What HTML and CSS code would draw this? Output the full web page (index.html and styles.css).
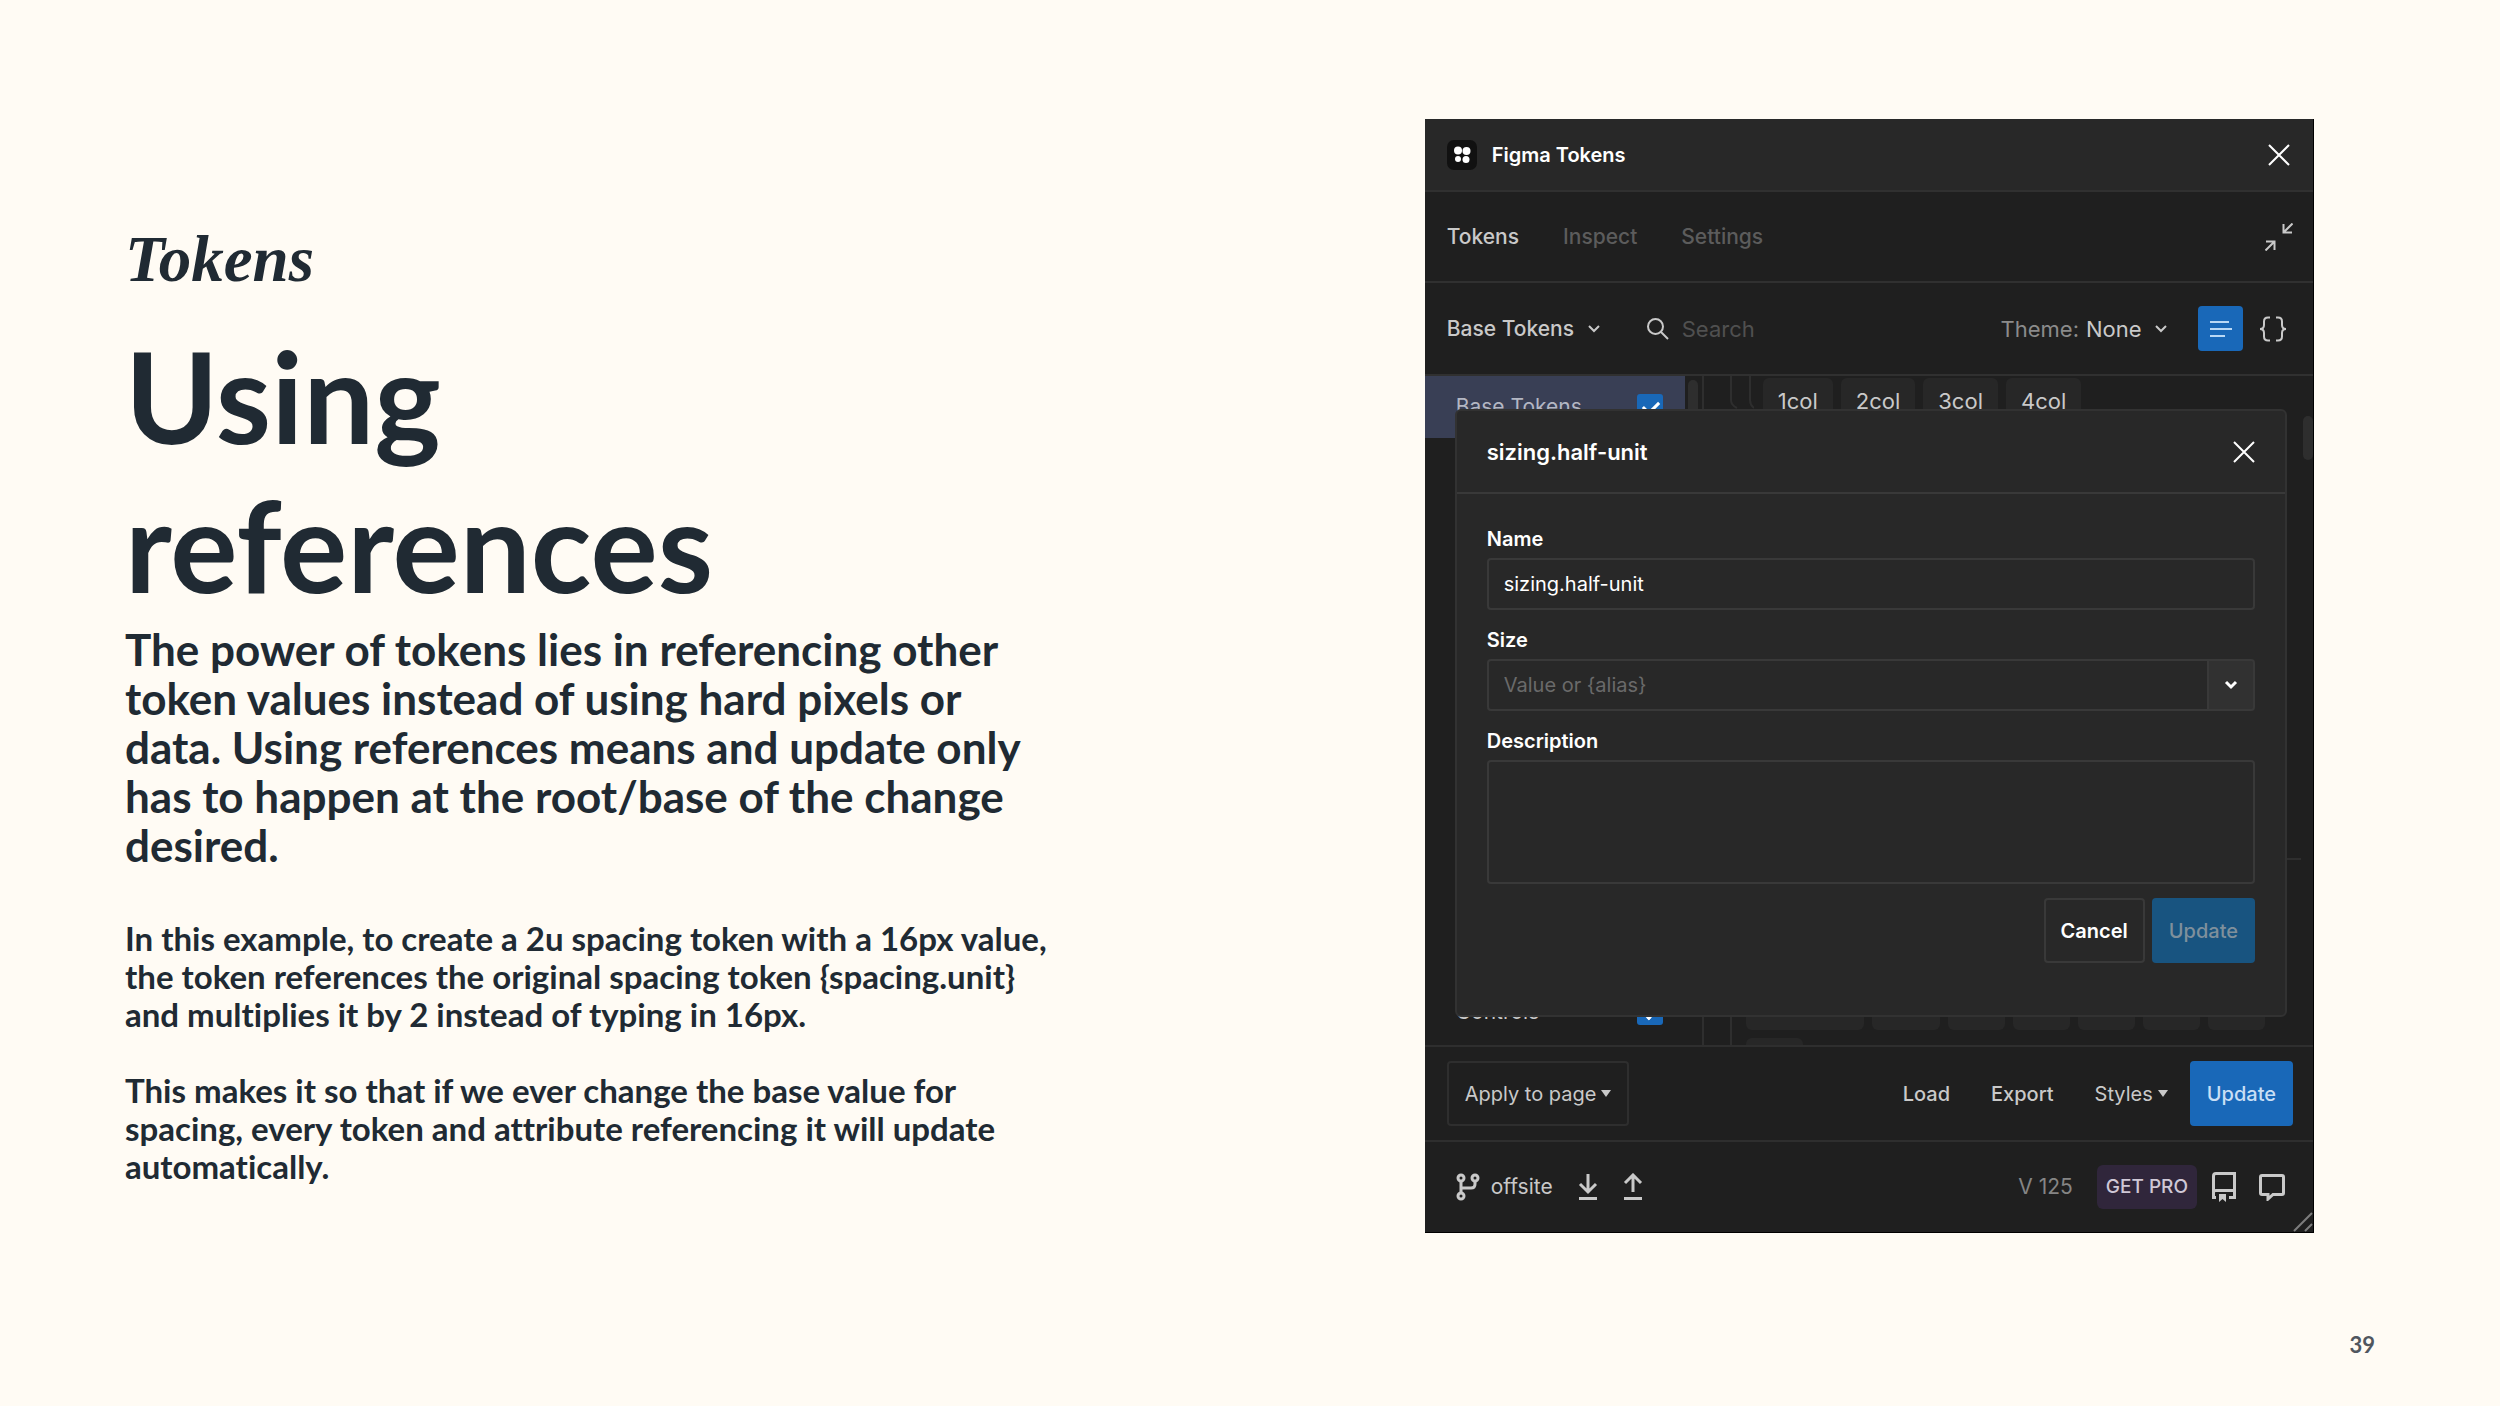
FILE: index.html
```
<!DOCTYPE html>
<html lang="en">
<head>
    <meta charset="UTF-8">
    <meta name="viewport" content="width=device-width, initial-scale=1.0">
    <title>Tokens - Using references</title>
    <link rel="stylesheet" href="styles.css">
</head>
<body>
    <main class="slide">
        <section class="copy">
            <p class="eyebrow">Tokens</p>
            <h1>Using<br>references</h1>
            <p class="lead">The power of tokens lies in referencing other<br>token values instead of using hard pixels or<br>data. Using references means and update only<br>has to happen at the root/base of the change<br>desired.</p>
            <p class="note">In this example, to create a 2u spacing token with a 16px value,<br>the token references the original spacing token {spacing.unit}<br>and multiplies it by 2 instead of typing in 16px.</p>
            <p class="note">This makes it so that if we ever change the base value for<br>spacing, every token and attribute referencing it will update<br>automatically.</p>
        </section>

        <section class="plugin">
            <header class="titlebar">
                <svg class="logo" width="30" height="30" viewBox="0 0 30 30">
                    <rect width="30" height="30" rx="7" fill="#111"/>
                    <g fill="#fff">
                        <circle cx="11" cy="10.500" r="4"/>
                        <circle cx="19.500" cy="11" r="4"/>
                        <circle cx="11" cy="19" r="3"/>
                        <circle cx="19" cy="19.500" r="3.500"/>
                    </g>
                </svg>
                <h2>Figma Tokens</h2>
                <button class="icon-btn push" aria-label="Close plugin">
                    <svg width="22" height="22" viewBox="0 0 22 22"><path d="M1 1l20 20M21 1L1 21"/></svg>
                </button>
            </header>

            <nav class="tabs">
                <a href="#" class="active">Tokens</a>
                <a href="#">Inspect</a>
                <a href="#">Settings</a>
                <button class="icon-btn push active" aria-label="Minimize">
                    <svg width="28" height="28" viewBox="0 0 28 28"><path d="M27.500 0.500L19 9M18.500 1v8.500H27M0.500 27.500L9 19M1 18.500h8.500V27"/></svg>
                </button>
            </nav>

            <div class="toolbar">
                <label class="picker sets">
                    <select aria-label="Token set"><option>Base Tokens</option></select>
                    <svg width="14" height="10" viewBox="0 0 14 10"><path d="M2 2l5 5 5-5"/></svg>
                </label>
                <label class="search">
                    <svg width="22" height="22" viewBox="0 0 22 22"><circle cx="8.500" cy="8.500" r="7.500"/><path d="M14 14l7 7"/></svg>
                    <input type="search" placeholder="Search">
                </label>
                <label class="picker theme">
                    <span>Theme:</span>
                    <select><option>None</option></select>
                    <svg width="14" height="10" viewBox="0 0 14 10"><path d="M2 2l5 5 5-5"/></svg>
                </label>
                <button class="list-btn" aria-label="List view">
                    <svg width="24" height="20" viewBox="0 0 24 20"><path d="M1 3h19M1 10h22M1 17h15"/></svg>
                </button>
                <button class="icon-btn" aria-label="JSON view">
                    <svg width="28" height="26" viewBox="0 0 28 26"><path d="M11 1.500H9C6.500 1.500 5 3 5 5.500V9c0 2.500-1.500 4-4 4 2.500 0 4 1.500 4 4v3.500c0 2.500 1.500 4 4 4h2M17 1.500h2c2.500 0 4 1.500 4 4V9c0 2.500 1.500 4 4 4-2.500 0-4 1.500-4 4v3.500c0 2.500-1.500 4-4 4h-2"/></svg>
                </button>
            </div>

            <div class="content">
                <aside class="sidebar">
                    <label class="set selected"><span>Base Tokens</span><input type="checkbox" checked></label>
                    <label class="set"><span>Controls</span><input type="checkbox" checked></label>
                    <i class="thumb"></i>
                </aside>
                <div class="tokens">
                    <div class="group nested">
                        <svg class="rails" width="25" height="34" viewBox="0 0 25 34"><path d="M2 0v24q0 5 6 8M21 0v24q0 5 4 8"/></svg>
                        <button class="chip">1col</button>
                        <button class="chip">2col</button>
                        <button class="chip">3col</button>
                        <button class="chip">4col</button>
                    </div>
                    <hr>
                    <div class="group last">
                        <i class="chip w120"></i>
                        <i class="chip w70"></i>
                        <i class="chip"></i>
                        <i class="chip"></i>
                        <i class="chip"></i>
                        <i class="chip"></i>
                        <i class="chip"></i>
                        <i class="chip"></i>
                    </div>
                    <i class="thumb"></i>
                </div>

                <form class="modal">
                    <div class="modal-head">
                        <h3>sizing.half-unit</h3>
                        <button type="button" class="icon-btn push" aria-label="Close dialog">
                            <svg width="22" height="22" viewBox="0 0 22 22"><path d="M1 1l20 20M21 1L1 21"/></svg>
                        </button>
                    </div>
                    <div class="modal-body">
                        <label for="name">Name</label>
                        <input id="name" type="text" value="sizing.half-unit">
                        <label for="size">Size</label>
                        <div class="combo">
                            <input id="size" type="text" placeholder="Value or {alias}">
                            <button type="button" aria-label="Choose alias">
                                <svg width="14" height="10" viewBox="0 0 14 10"><path d="M2 2l5 5 5-5"/></svg>
                            </button>
                        </div>
                        <label for="description">Description</label>
                        <textarea id="description"></textarea>
                        <div class="actions">
                            <button type="button" class="btn">Cancel</button>
                            <button type="submit" class="btn primary" disabled>Update</button>
                        </div>
                    </div>
                </form>
            </div>

            <div class="actionbar">
                <button class="btn outline">Apply to page<i class="caret"></i></button>
                <button class="text-btn push">Load</button>
                <button class="text-btn">Export</button>
                <button class="text-btn styles">Styles<i class="caret"></i></button>
                <button class="btn primary">Update</button>
            </div>

            <footer class="statusbar">
                <button class="branch">
                    <svg width="24" height="28" viewBox="0 0 24 28"><circle cx="5" cy="5" r="3"/><circle cx="19" cy="5" r="3"/><circle cx="5" cy="23" r="3"/><path d="M5 8v12M5 15h10q4 0 4-4V8"/></svg>
                    <span>offsite</span>
                </button>
                <button class="icon-btn" aria-label="Pull">
                    <svg width="20" height="28" viewBox="0 0 20 28"><path d="M10 1v17M2 11l8 8 8-8M1 25.500h18"/></svg>
                </button>
                <button class="icon-btn" aria-label="Push">
                    <svg width="20" height="28" viewBox="0 0 20 28"><path d="M10 19V2M2 10l8-8 8 8M1 25.500h18"/></svg>
                </button>
                <span class="version">V 125</span>
                <a href="#" class="pro">GET PRO</a>
                <button class="icon-btn docs" aria-label="Documentation">
                    <svg width="24" height="30" viewBox="0 0 24 30"><path d="M4 25.500H1.500V4q0-2.500 2.500-2.500h18.500v24H17M1.500 20q0-1.500 2.500-1.500h18.500"/><path class="solid" d="M7 22h7v8l-3.500-3L7 30z"/></svg>
                </button>
                <button class="icon-btn" aria-label="Feedback">
                    <svg width="26" height="28" viewBox="0 0 26 28"><path d="M3 2.500h20q1.500 0 1.500 1.500v16q0 1.500-1.500 1.500h-9l-5 4.500v-4.500H3q-1.500 0-1.500-1.500V4q0-1.500 1.500-1.500z"/></svg>
                </button>
            </footer>
            <svg class="resize" width="20" height="20" viewBox="0 0 20 20"><path d="M1 19L19 1M12 19l7-7"/></svg>
        </section>
    </main>
    <div class="page-number">39</div>
</body>
</html>
```

FILE: styles.css
```
* { margin: 0; padding: 0; box-sizing: border-box; }
body {
    display: flex;
    flex-direction: column;
    min-height: 100vh;
    background: #fffbf4;
    color: #202a33;
    font-family: Lato, sans-serif;
}
button, input, select, textarea { font: inherit; color: inherit; background: none; border: none; outline: none; }
a { color: inherit; text-decoration: none; }
svg { display: block; flex: none; fill: none; stroke: currentColor; stroke-width: 2; }
.push { margin-left: auto; }

.slide {
    display: grid;
    grid-template-columns: minmax(0, 19fr) minmax(0, 13fr);
    align-items: start;
    padding: 119px 186px 0 125px;
}

/* Left column */
.copy { padding-top: 100px; font-weight: 700; font-variant-ligatures: none; }
.eyebrow {
    font: italic bold 65px/80px "Liberation Serif", serif;
}
h1 { font-size: 126px; line-height: 149px; margin-top: 22px; }
.lead { font-size: 44px; line-height: 49px; margin-top: 6px; }
.note { font-size: 33px; line-height: 38px; margin-top: 38px; }
.lead + .note { margin-top: 49px; }

/* Plugin window */
.plugin {
    position: relative;
    background: #1f1f1f;
    border-right: 1px solid #000;
    border-bottom: 1px solid #000;
    color: #c9c9c9;
    font-family: Inter, sans-serif;
    font-size: 20px;
    font-weight: 500;
    line-height: 26px;
}
.titlebar, .tabs, .toolbar { display: flex; align-items: center; padding: 0 22px; border-bottom: 2px solid #303030; }
.titlebar { height: 73px; padding-right: 23px; background: #282828; color: #fff; }
.titlebar svg.logo { stroke: none; }
.titlebar h2 { margin-left: 15px; font-size: 20px; font-weight: 600; }
.icon-btn { display: flex; }

.tabs { height: 91px; padding-right: 20px; gap: 44px; color: #5c5c5c; font-size: 21px; }
.tabs .active { color: #c9c9c9; }

.toolbar { height: 93px; padding-right: 26px; }
.picker { display: flex; align-items: center; gap: 12px; }
.picker select { appearance: none; }
.sets { font-size: 21px; }
.search { display: flex; flex: 1; align-items: center; gap: 13px; margin-left: 46px; font-size: 22px; font-weight: 400; }
.search input { width: 100%; }
.search input::placeholder { color: #505050; opacity: 1; }
.theme { gap: 7px; font-size: 22px; font-weight: 400; }
.theme span { color: #8b8b8b; }
.theme svg { margin-left: 5px; }
.list-btn {
    display: flex;
    align-items: center;
    justify-content: center;
    width: 45px;
    height: 45px;
    margin: 0 16px 0 30px;
    border-radius: 4px;
    background: #1968b8;
    color: #b9d8f5;
}

/* Token list, mostly behind the dialog */
.content { position: relative; display: flex; height: 671px; border-bottom: 2px solid #2e2e2e; }
.sidebar {
    position: relative;
    display: flex;
    flex: none;
    flex-direction: column;
    justify-content: space-between;
    width: 279px;
    padding: 0 17px 2px 0;
    border-right: 2px solid #2e2e2e;
    font-size: 21px;
    font-weight: 400;
}
.set { display: flex; align-items: center; justify-content: space-between; height: 62px; padding: 0 22px 0 31px; }
.set.selected { background: #393f55; color: #b4b7c3; }
.set input {
    appearance: none;
    width: 26px;
    height: 26px;
    border-radius: 3px;
    background: #1968b8;
}
.set input::after {
    content: "";
    display: block;
    width: 13px;
    height: 7px;
    margin: 7px 6px;
    border: solid #fff;
    border-width: 0 0 3px 3px;
    transform: rotate(-45deg);
}
.thumb { position: absolute; border-radius: 5px; background: #2e2e2e; }
.sidebar .thumb { top: 4px; right: 4px; width: 10px; height: 200px; }
.tokens { position: relative; display: flex; flex: 1; flex-direction: column; min-width: 0; }
.tokens .thumb { top: 40px; right: 0; width: 10px; height: 44px; }
.tokens hr { border: none; border-top: 2px solid #2e2e2e; margin: 434px 12px auto 26px; }
.group { display: flex; gap: 8px; }
.group.nested { padding-left: 25px; }
.rails { color: #2e2e2e; margin-right: 1px; }
.chip { height: 46px; margin-top: 2px; padding: 0 15px; border-radius: 6px; background: #272727; font-weight: 400; font-size: 22px; }
.group.last {
    flex-wrap: wrap;
    align-content: flex-start;
    height: 56px;
    margin-left: 26px;
    padding-left: 14px;
    overflow: hidden;
    border-left: 2px solid #2e2e2e;
}
.group.last .chip { width: 57px; height: 41px; margin: 0; padding: 0; }
.group.last .w120 { width: 118px; }
.group.last .w70 { width: 68px; }

/* Dialog */
.modal {
    position: absolute;
    top: 33px;
    right: 26px;
    bottom: 28px;
    left: 30px;
    border: 2px solid #323232;
    border-radius: 6px;
    background: #282828;
    color: #fff;
}
.modal-head { display: flex; align-items: center; height: 83px; padding: 0 30px; border-bottom: 2px solid #393939; }
.modal-head h3 { font-size: 22px; font-weight: 600; }
.modal-body { display: flex; flex-direction: column; padding: 32px 30px; }
.modal-body label { margin-bottom: 6px; font-weight: 600; line-height: 26px; }
.modal-body input, .modal-body textarea {
    width: 100%;
    height: 52px;
    margin-bottom: 17px;
    padding: 0 15px;
    border: 2px solid #393939;
    border-radius: 4px;
    font-weight: 400;
}
.modal-body textarea { height: 124px; margin-bottom: 14px; resize: none; }
.combo { display: flex; margin-bottom: 17px; }
.modal-body .combo input { margin: 0; border-radius: 4px 0 0 4px; }
.combo input::placeholder { color: #6a6a6a; opacity: 1; }
.combo button {
    display: flex;
    align-items: center;
    justify-content: center;
    width: 49px;
    border: 2px solid #393939;
    border-left: none;
    border-radius: 0 4px 4px 0;
    background: #313131;
}
.combo svg { stroke-width: 3; }
.actions { display: flex; justify-content: flex-end; gap: 7px; }
.btn {
    display: flex;
    align-items: center;
    height: 65px;
    padding: 0 15px;
    border: 2px solid #393939;
    border-radius: 4px;
    font-weight: 600;
}
.btn.primary { border-color: #1968b8; background: #1968b8; color: #c9dff5; font-weight: 500; }
.btn.primary:disabled { border-color: #185480; background: #185480; color: #7f909c; }
.btn.outline { padding: 0 16px; border-color: #2e2e2e; font-weight: 400; }

/* Bottom bars */
.actionbar { display: flex; align-items: center; height: 95px; padding: 0 20px 0 22px; border-bottom: 2px solid #2e2e2e; }
.text-btn { display: flex; align-items: center; margin-right: 41px; }
.text-btn.styles { margin-right: 22px; font-weight: 400; }
.caret { margin-left: 5px; border: 5px solid transparent; border-top: 7px solid #c9c9c9; border-bottom: none; }
.statusbar { display: flex; align-items: center; height: 90px; padding: 0 28px 0 31px; font-size: 21px; font-weight: 400; }
.statusbar svg { stroke-width: 3; }
.statusbar .solid { fill: currentColor; stroke: none; }
.branch { display: flex; align-items: center; gap: 11px; }
.branch + .icon-btn, .branch + .icon-btn + .icon-btn { margin-left: 25px; }
.version { margin-left: auto; color: #858585; }
.pro { margin: 0 15px 0 24px; padding: 9px; border-radius: 6px; background: #30263b; color: #cfc8d6; font-size: 19px; font-weight: 500; }
.docs { margin-right: 23px; }
.resize { position: absolute; right: 0; bottom: 0; color: #7d7d7d; }

.page-number {
    margin-top: auto;
    padding: 0 125px 47px 0;
    color: #50565e;
    font-size: 22px;
    font-weight: 700;
    line-height: 28px;
    text-align: right;
}
```
